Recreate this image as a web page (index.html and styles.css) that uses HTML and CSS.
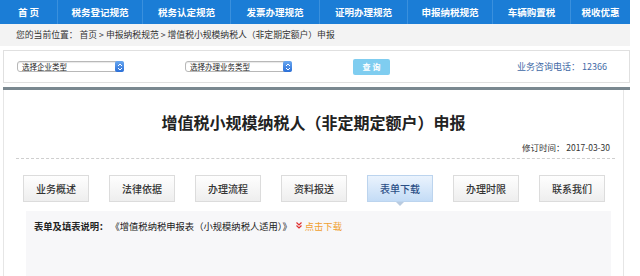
FILE: index.html
```html
<!DOCTYPE html>
<html lang="zh">
<head>
<meta charset="utf-8">
<link rel="stylesheet" href="styles.css">
</head>
<body>
<div class="page">
  <nav class="nav">
    <a class="nav-item w58">首 页</a>
    <a class="nav-item w85">税务登记规范</a>
    <a class="nav-item w88">税务认定规范</a>
    <a class="nav-item w89">发票办理规范</a>
    <a class="nav-item w88">证明办理规范</a>
    <a class="nav-item w85">申报纳税规范</a>
    <a class="nav-item w78">车辆购置税</a>
    <a class="nav-item w59">税收优惠</a>
  </nav>
  <div class="crumb">您的当前位置：&nbsp;首页 &gt; 申报纳税规范 &gt; 增值税小规模纳税人（非定期定额户）申报</div>
  <div class="filter">
    <div class="select"><span>选择企业类型</span><i class="stepper"><svg width="6" height="8" viewBox="0 0 6 8"><path d="M1 3 L3 1 L5 3 M1 5 L3 7 L5 5" fill="none" stroke="#fff" stroke-width="1"/></svg></i></div>
    <div class="select sel2"><span>选择办理业务类型</span><i class="stepper"><svg width="6" height="8" viewBox="0 0 6 8"><path d="M1 3 L3 1 L5 3 M1 5 L3 7 L5 5" fill="none" stroke="#fff" stroke-width="1"/></svg></i></div>
    <div class="query">查 询</div>
    <div class="phone">业务咨询电话：&nbsp;12366</div>
  </div>
  <div class="darkline"></div>
  <div class="panel">
    <h1 class="title">增值税小规模纳税人（非定期定额户）申报</h1>
    <div class="revised">修订时间：&nbsp;2017-03-30</div>
    <div class="tabs">
      <div class="tab">业务概述</div>
      <div class="tab">法律依据</div>
      <div class="tab">办理流程</div>
      <div class="tab">资料报送</div>
      <div class="tab active">表单下载</div>
      <div class="tab">办理时限</div>
      <div class="tab">联系我们</div>
    </div>
    <div class="content">
      <div class="line"><b class="lbl">表单及填表说明：</b>&nbsp;《增值税纳税申报表（小规模纳税人适用）》<span class="dl"><svg class="chev" width="6" height="7" viewBox="0 0 6 7"><path d="M0.5 0.5 L3 3 L5.5 0.5 M0.5 3.5 L3 6 L5.5 3.5" fill="none" stroke="#e03030" stroke-width="1.2"/></svg>点击下载</span></div>
    </div>
  </div>
</div>
</body>
</html>
```
FILE: styles.css
```css
* { box-sizing: border-box; margin: 0; padding: 0; }
body {
  margin: 0;
  background: #fff;
  font-family: "Noto Sans CJK SC", "Noto Sans", sans-serif;
  color: #333;
}
.page { width: 630px; height: 276px; overflow: hidden; }
.nav {
  display: flex;
  height: 24px;
  background: #1b7dd6;
}
.nav-item {
  display: flex;
  align-items: center;
  justify-content: center;
  color: #fff;
  font-size: 9.5px;
  font-weight: 700;
  border-right: 1px solid #3a90dd;
}
.nav-item:last-child { border-right: none; }
.w58 { width: 58px; }
.w59 { width: 59px; }
.w78 { width: 78px; }
.w85 { width: 85px; }
.w88 { width: 88px; }
.w89 { width: 89px; }
.crumb {
  height: 22px;
  background: #f3f3f3;
  font-size: 8.8px;
  line-height: 22px;
  padding-left: 16px;
  color: #333;
}
.filter {
  margin: 4px 0 0 3px;
  height: 33px;
  border: 1px solid #e0e0e0;
  display: flex;
  align-items: center;
  padding-left: 13px;
  padding-right: 22px;
}
.select {
  width: 107px;
  height: 11px;
  border: 1px solid #b8b8b8;
  border-radius: 3px;
  background: #fff;
  display: flex;
  align-items: center;
  justify-content: space-between;
  font-size: 7.5px;
  color: #222;
  padding-left: 4px;
  box-shadow: inset 0 1px 1px #e8e8e8;
}
.sel2 { margin-left: 61px; }
.stepper {
  width: 9px;
  height: 11px;
  margin-right: -1px;
  border-radius: 2px;
  background: linear-gradient(#6aa8f0, #2a6fd8);
  display: flex;
  align-items: center;
  justify-content: center;
}
.query {
  margin-left: 61px;
  width: 37px;
  height: 16px;
  border-radius: 2px;
  background: #7fcdf0;
  color: #fff;
  font-size: 8px;
  font-weight: 700;
  display: flex;
  align-items: center;
  justify-content: center;
}
.phone {
  margin-left: auto;
  font-size: 9px;
  color: #3f6aa6;
}
.darkline {
  margin: 4px 0 0 3px;
  height: 3px;
  background: #7a8890;
}
.panel {
  margin: 0 6px 0 3px;
  border-left: 1px solid #e6e6e6;
  border-right: 1px solid #e6e6e6;
  height: 200px;
  padding: 20px 8px 0 12px;
}
.title {
  text-align: center;
  font-size: 16px;
  font-weight: 700;
  line-height: 24px;
  color: #222;
  margin-left: -4px;
}
.revised {
  text-align: right;
  font-size: 8.5px;
  line-height: 12px;
  margin-top: 7px;
  padding-right: 5px;
  padding-bottom: 5px;
  border-bottom: 1px dashed #cfcfcf;
  color: #333;
}
.tabs {
  display: flex;
  gap: 20px;
  margin-top: 16px;
  padding-left: 7px;
}
.tab {
  position: relative;
  width: 66px;
  height: 27px;
  border: 1px solid #dcdcdc;
  background: linear-gradient(#fefefe, #eeeeee);
  font-size: 10px;
  font-weight: 500;
  color: #333;
  display: flex;
  align-items: center;
  justify-content: center;
}
.tab.active {
  background: linear-gradient(#eaf3fd, #c4dcf6);
  border-color: #bcd4ee;
  color: #2b4f86;
}
.tab.active::after {
  content: "";
  position: absolute;
  left: 50%;
  bottom: -5px;
  margin-left: -4px;
  border-left: 4px solid transparent;
  border-right: 4px solid transparent;
  border-top: 4px solid #b9cbe0;
}
.content {
  margin: 9px 4px 0 10px;
  height: 80px;
  background: #f7f7f9;
  padding: 9px 0 0 8px;
}
.line {
  font-size: 9.3px;
  line-height: 13px;
  color: #222;
  display: flex;
  align-items: center;
}
.lbl { font-weight: 700; }
.dl {
  display: inline-flex;
  align-items: center;
  margin-left: 4px;
  color: #f0a030;
}
.chev { margin-right: 3px; margin-top: -3px; }
```
